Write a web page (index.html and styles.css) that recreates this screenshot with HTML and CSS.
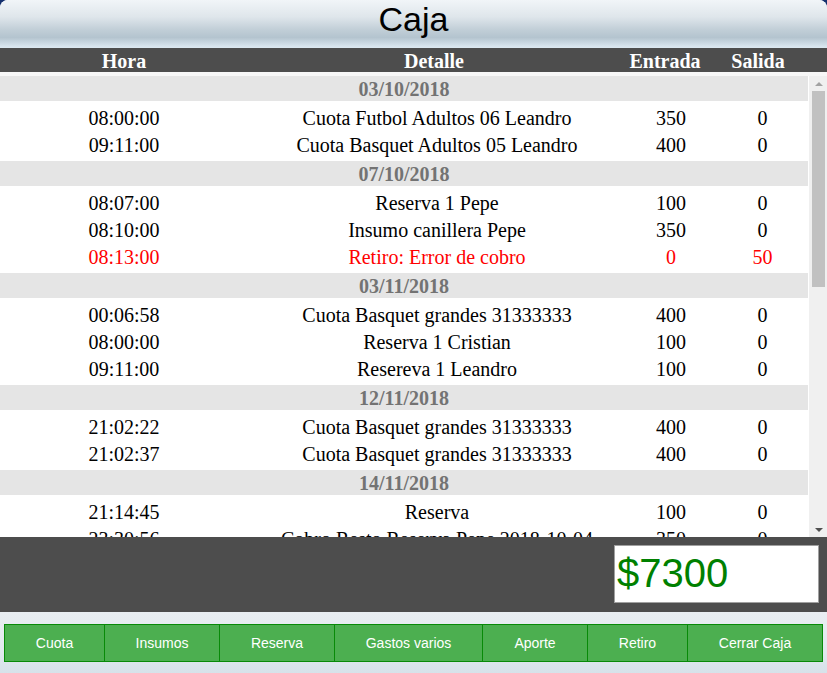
FILE: index.html
```html
<!DOCTYPE html>
<html lang="es">
<head>
<meta charset="utf-8">
<title>Caja</title>
<link rel="stylesheet" href="styles.css">
</head>
<body>
<div class="app">
  <header class="title">Caja</header>
  <div class="thead">
    <div>Hora</div>
    <div>Detalle</div>
    <div>Entrada</div>
    <div>Salida</div>
  </div>
  <div class="listarea">
    <div class="scroll">
      <section class="day">
        <div class="date">03/10/2018</div>
        <div class="rows">
          <div class="row"><span>08:00:00</span><span>Cuota Futbol Adultos 06 Leandro</span><span>350</span><span>0</span></div>
          <div class="row"><span>09:11:00</span><span>Cuota Basquet Adultos 05 Leandro</span><span>400</span><span>0</span></div>
        </div>
      </section>
      <section class="day">
        <div class="date">07/10/2018</div>
        <div class="rows">
          <div class="row"><span>08:07:00</span><span>Reserva 1 Pepe</span><span>100</span><span>0</span></div>
          <div class="row"><span>08:10:00</span><span>Insumo canillera Pepe</span><span>350</span><span>0</span></div>
          <div class="row out"><span>08:13:00</span><span>Retiro: Error de cobro</span><span>0</span><span>50</span></div>
        </div>
      </section>
      <section class="day">
        <div class="date">03/11/2018</div>
        <div class="rows">
          <div class="row"><span>00:06:58</span><span>Cuota Basquet grandes 31333333</span><span>400</span><span>0</span></div>
          <div class="row"><span>08:00:00</span><span>Reserva 1 Cristian</span><span>100</span><span>0</span></div>
          <div class="row"><span>09:11:00</span><span>Resereva 1 Leandro</span><span>100</span><span>0</span></div>
        </div>
      </section>
      <section class="day">
        <div class="date">12/11/2018</div>
        <div class="rows">
          <div class="row"><span>21:02:22</span><span>Cuota Basquet grandes 31333333</span><span>400</span><span>0</span></div>
          <div class="row"><span>21:02:37</span><span>Cuota Basquet grandes 31333333</span><span>400</span><span>0</span></div>
        </div>
      </section>
      <section class="day">
        <div class="date">14/11/2018</div>
        <div class="rows">
          <div class="row"><span>21:14:45</span><span>Reserva</span><span>100</span><span>0</span></div>
          <div class="row"><span>23:30:56</span><span>Cobro Resto Reserva Pepe 2018-10-04</span><span>350</span><span>0</span></div>
        </div>
      </section>
    </div>
    <div class="scrollbar" aria-hidden="true">
      <div class="sb-btn"><i class="arrow-up"></i></div>
      <div class="sb-track"><div class="sb-thumb"></div></div>
      <div class="sb-btn"><i class="arrow-down"></i></div>
    </div>
  </div>
  <div class="totalbar">
    <div class="total">$7300</div>
  </div>
  <nav class="actions">
    <button class="btn">Cuota</button>
    <button class="btn">Insumos</button>
    <button class="btn">Reserva</button>
    <button class="btn">Gastos varios</button>
    <button class="btn">Aporte</button>
    <button class="btn">Retiro</button>
    <button class="btn">Cerrar Caja</button>
  </nav>
</div>
</body>
</html>
```

FILE: styles.css
```css
html, body {
  margin: 0;
  padding: 0;
}
body {
  background: #14306e;
  font-family: "Liberation Serif", "Times New Roman", serif;
}
.app {
  width: 827px;
  height: 673px;
  border-radius: 8px 8px 0 0;
  overflow: hidden;
  display: flex;
  flex-direction: column;
  background: #ffffff;
}
.title {
  height: 48px;
  flex: none;
  box-sizing: border-box;
  padding-top: 1px;
  line-height: 36px;
  text-align: center;
  font-family: "Liberation Sans", Arial, sans-serif;
  font-size: 34px;
  color: #000;
  background: linear-gradient(to bottom, #f1f5f8 0%, #dfe6eb 35%, #c1ced7 62%, #b4c4cf 78%, #d5e2eb 95%, #dde9f1 100%);
}
.thead {
  height: 24px;
  flex: none;
  display: grid;
  grid-template-columns: 248px 372px 90px 96px 1fr;
  background: #4d4d4d;
  color: #fff;
  font-weight: bold;
  font-size: 20px;
  line-height: 27px;
  text-align: center;
}
.listarea {
  flex: none;
  height: 461px;
  border-top: 4px solid #f7f7f7;
  display: flex;
}
.scroll {
  flex: 1;
  min-width: 0;
  overflow: hidden;
  background: #fff;
}
.scrollbar {
  width: 18px;
  flex: none;
  background: #f0f0f0;
  display: flex;
  flex-direction: column;
}
.sb-btn {
  height: 15px;
  flex: none;
  display: flex;
  align-items: center;
  justify-content: center;
  padding-left: 1px;
}
.arrow-up {
  width: 0;
  height: 0;
  border-left: 4px solid transparent;
  border-right: 4px solid transparent;
  border-bottom: 4px solid #a3a3a3;
}
.arrow-down {
  width: 0;
  height: 0;
  border-left: 4px solid transparent;
  border-right: 4px solid transparent;
  border-top: 4px solid #505050;
}
.sb-track {
  flex: 1;
  padding: 0 2px 0 3px;
}
.sb-thumb {
  height: 196px;
  background: #c1c1c1;
}
.date {
  height: 25px;
  margin-right: 1px;
  background: #e5e5e5;
  color: #737373;
  font-weight: bold;
  font-size: 20px;
  line-height: 26px;
  text-align: center;
}
.rows {
  padding: 3px 0;
}
.row {
  display: grid;
  grid-template-columns: 248px 378px 90px 1fr;
  height: 27px;
  font-size: 20px;
  line-height: 29px;
  text-align: center;
  color: #000;
  white-space: nowrap;
}
.row.out {
  color: #ff0000;
}
.totalbar {
  flex: none;
  height: 75px;
  box-sizing: border-box;
  padding: 8px 8px 0 0;
  background: #4d4d4d;
  display: flex;
  justify-content: flex-end;
  align-items: flex-start;
}
.total {
  width: 205px;
  height: 58px;
  box-sizing: border-box;
  border: 1px solid #a0a0a0;
  background: #fff;
  color: #008000;
  font-family: "Liberation Sans", Arial, sans-serif;
  font-size: 40px;
  line-height: 54px;
  padding-left: 2px;
  overflow: hidden;
}
.actions {
  flex: 1;
  box-sizing: border-box;
  padding: 12px 4px 0 4px;
  background: linear-gradient(to bottom, #e9eef2 0%, #e2e9ee 60%, #d6e2ea 100%);
  display: grid;
  grid-template-columns: 101px 115px 115px 148px 105px 100px 135px;
  align-content: start;
}
.btn {
  height: 38px;
  margin: 0;
  padding: 0;
  border: 1px solid #088a08;
  border-left: none;
  background: #4caf50;
  color: #fff;
  font-family: "Liberation Sans", Arial, sans-serif;
  font-size: 14px;
  line-height: 36px;
  cursor: pointer;
}
.btn:first-child {
  border-left: 1px solid #088a08;
}
```
